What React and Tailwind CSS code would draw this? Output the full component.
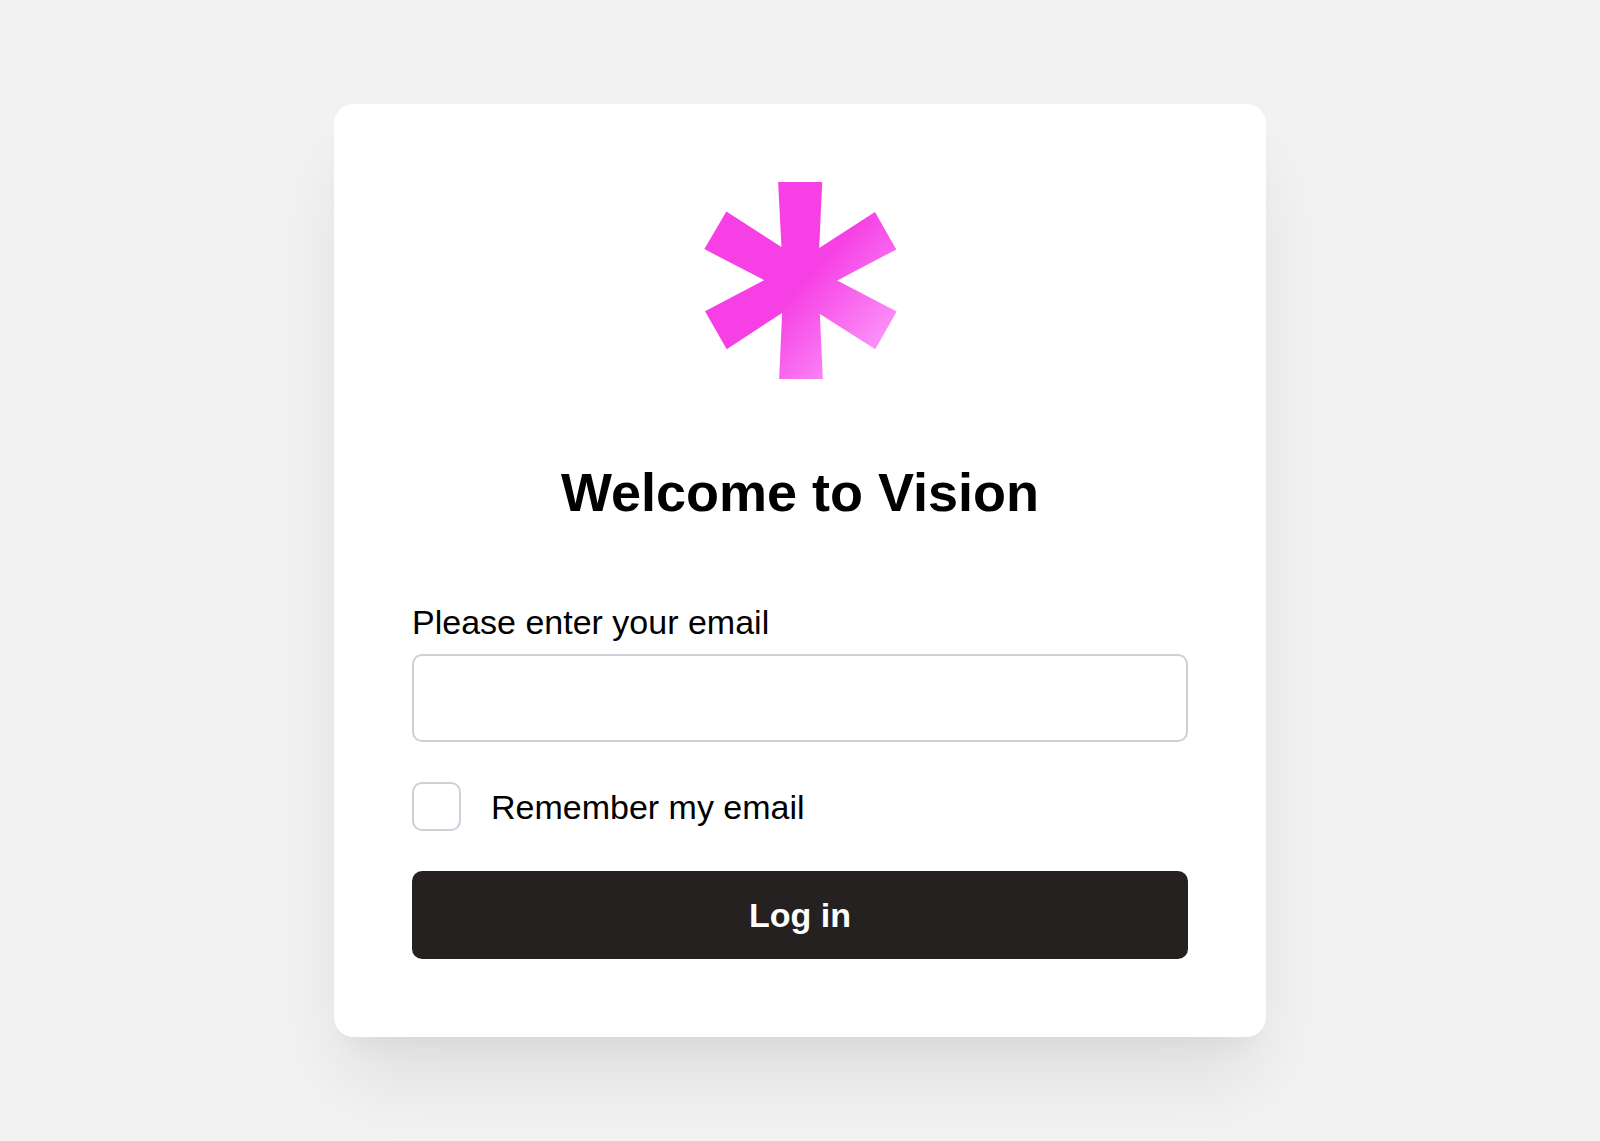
import React, { useState } from "react";

function Logo() {
  return (
    <svg
      className="mx-auto size-[197px]"
      viewBox="36 37 590 590"
      role="img"
      aria-label="Vision"
    >
      <defs>
        <linearGradient id="logo-fill" gradientUnits="userSpaceOnUse" x1="345" y1="325" x2="572" y2="530">
          <stop offset="0" stopColor="#f63fe4" />
          <stop offset="1" stopColor="#fb93f9" />
        </linearGradient>
      </defs>
      <path
        fill="url(#logo-fill)"
        d="M264 37H396L387 235L554 127L618 239L441 332L619 425L555 538L389 432L398 627H267L276 429L110 538L45 424L222 331L43 238L109 125L274 232Z"
      />
    </svg>
  );
}

export default function App() {
  const [email, setEmail] = useState("");
  const [remember, setRemember] = useState(false);

  function handleSubmit(e) {
    e.preventDefault();
  }

  return (
    <main className="flex min-h-screen items-center justify-center overflow-hidden bg-[#f2f2f2] p-10 font-['Liberation_Sans',Arial,sans-serif] text-black">
      <div className="w-full max-w-[932px] rounded-[20px] bg-white p-[78px] shadow-[0_49px_80px_-12px_rgba(0,0,0,0.09),0_20px_24px_-12px_rgba(0,0,0,0.04)]">
        <Logo />
        <h1 className="mt-[79px] mb-[76px] text-center text-[54px] leading-[68px] font-bold">
          Welcome to Vision
        </h1>

        <form onSubmit={handleSubmit} className="flex flex-col gap-10" noValidate>
          <div className="flex flex-col gap-3">
            <label htmlFor="email" className="text-[34px] leading-10">
              Please enter your email
            </label>
            <input
              id="email"
              type="email"
              value={email}
              onChange={(e) => setEmail(e.target.value)}
              className="h-[88px] w-full rounded-[10px] border-2 border-[#cbd1d9] bg-white px-6 text-[34px] outline-none focus:border-[#f63fe4]"
            />
          </div>

          <div className="flex items-center gap-[30px]">
            <input
              id="remember"
              type="checkbox"
              checked={remember}
              onChange={(e) => setRemember(e.target.checked)}
              className="size-[49px] shrink-0 appearance-none rounded-[10px] border-2 border-[#cbd1d9] bg-white checked:border-[#f63fe4] checked:bg-[#f63fe4]"
            />
            <label htmlFor="remember" className="text-[34px] leading-10">
              Remember my email
            </label>
          </div>

          <button
            type="submit"
            className="h-[88px] w-full cursor-pointer rounded-[10px] bg-[#252120] text-[34px] leading-10 font-bold text-white"
          >
            Log in
          </button>
        </form>
      </div>
    </main>
  );
}
